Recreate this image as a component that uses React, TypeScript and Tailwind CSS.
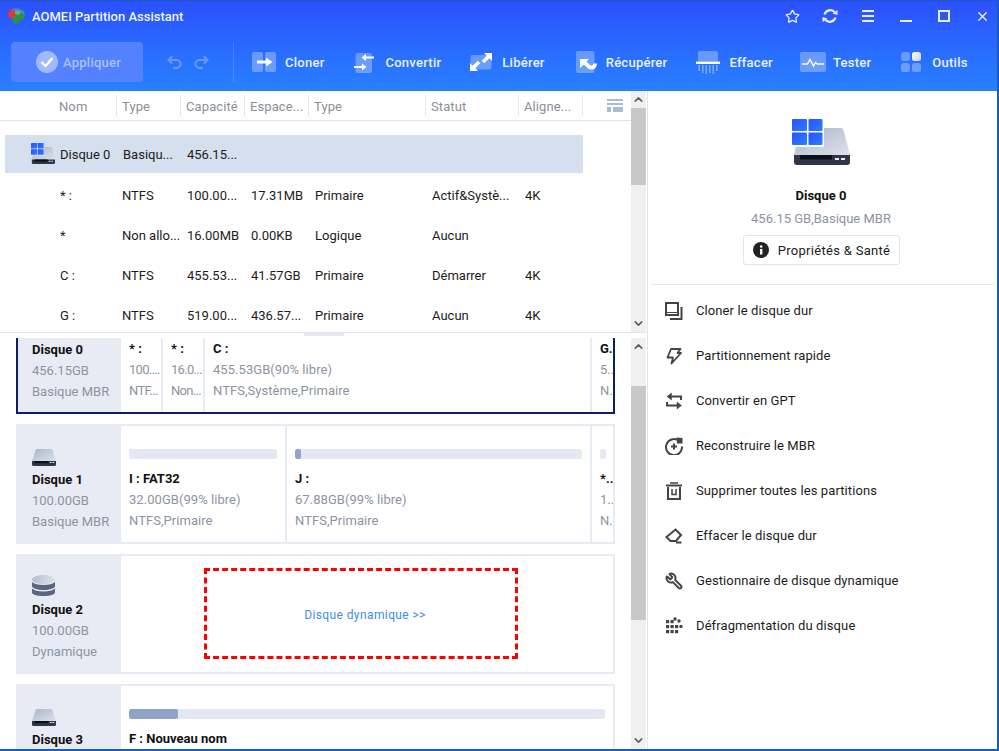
import { ChevronDown, ChevronUp, Star, Wrench, X } from 'lucide-react'
import type { ReactNode } from 'react'

const columns = [
  { label: 'Nom', cls: 'w-[117px] pl-[59px]' },
  { label: 'Type', cls: 'w-[64px] pl-[5px]' },
  { label: 'Capacité', cls: 'w-[64px] pl-[5px]' },
  { label: 'Espace...', cls: 'w-[64px] pl-[5px]' },
  { label: 'Type', cls: 'w-[117px] pl-[5px]' },
  { label: 'Statut', cls: 'w-[93px] pl-[5px]' },
  { label: 'Aligne...', cls: 'w-[64px] pl-[5px]' },
]

const rows = [
  ['* :', 'NTFS', '100.00...', '17.31MB', 'Primaire', 'Actif&Systè...', '4K'],
  ['*', 'Non allo...', '16.00MB', '0.00KB', 'Logique', 'Aucun', ''],
  ['C :', 'NTFS', '455.53...', '41.57GB', 'Primaire', 'Démarrer', '4K'],
  ['G :', 'NTFS', '519.00...', '436.57...', 'Primaire', 'Aucun', '4K'],
]

function DiskIcon({ className, id }: { className: string; id: string }) {
  return (
    <svg viewBox="0 0 24 17" className={className}>
      <defs>
        <linearGradient id={id} x1="0" y1="0" x2="1" y2="1">
          <stop offset="0" stopColor="#aab4cb" />
          <stop offset="1" stopColor="#dde1ea" />
        </linearGradient>
      </defs>
      <path d="M3.6 1.2Q3.8 0 5 0H19Q20.2 0 20.5 1.2L24 12H0Z" fill={`url(#${id})`} />
      <path d="M0 12H24V15.5Q24 17 22.5 17H1.5Q0 17 0 15.5Z" fill="#2f3648" />
      <rect x="2.5" y="12" width="14" height="2.2" fill="#0c0f18" />
      <rect x="17.8" y="13" width="1.8" height="1" fill="#e8ecf5" />
      <rect x="20.4" y="13" width="1.8" height="1" fill="#e8ecf5" />
    </svg>
  )
}

function WindowsDisk({ big }: { big?: boolean }) {
  const id = big ? 'winBig' : 'winSmall'
  return (
    <svg viewBox="0 0 58 46" preserveAspectRatio="none" className={big ? 'w-[58px] h-[46px]' : 'w-[24px] h-[21px]'}>
      <defs>
        <linearGradient id={id} x1="0" y1="0" x2="1" y2="1">
          <stop offset="0" stopColor="#2b50ff" />
          <stop offset="1" stopColor="#2a80ff" />
        </linearGradient>
        <linearGradient id={id + 'b'} x1="0" y1="0" x2="1" y2="1">
          <stop offset="0" stopColor="#aab4cb" />
          <stop offset="1" stopColor="#dde1ea" />
        </linearGradient>
      </defs>
      <path d="M8 9H49Q51 9 51.500 11L58 36H2Z" fill={`url(#${id}b)`} />
      <path d="M2 36H58V43Q58 46 55 46H5Q2 46 2 43Z" fill="#2f3648" />
      <rect x="8" y="36" width="32" height="4.500" fill="#0c0f18" />
      <rect x="43" y="39" width="4" height="2" fill="#e8ecf5" />
      <rect x="49" y="39" width="4" height="2" fill="#e8ecf5" />
      <path d="M0 0H32V28H0Z" fill={big ? '#fff' : '#d5dfee'} />
      <rect x="0" y="0" width="15" height="12" rx="1" fill={`url(#${id})`} />
      <rect x="16.500" y="0" width="14" height="12" rx="1" fill={`url(#${id})`} />
      <rect x="0" y="13.500" width="15" height="12.500" rx="1" fill={`url(#${id})`} />
      <rect x="16.500" y="13.500" width="14" height="12.500" rx="1" fill={`url(#${id})`} />
    </svg>
  )
}

function StackIcon() {
  return (
    <svg viewBox="0 0 23 21" className="w-[23px] h-[21px]">
      <defs>
        <linearGradient id="stackTop" x1="0" y1="0" x2="1" y2="0">
          <stop offset="0" stopColor="#b4bccd" />
          <stop offset="1" stopColor="#dfe3ea" />
        </linearGradient>
      </defs>
      <path d="M0 13.500V17.500C0 19.500 5 21 11.500 21S23 19.500 23 17.500V13.500C21 15.500 17 16.500 11.500 16.500S2 15.500 0 13.500Z" fill="#5a6582" />
      <path d="M0 7V11C0 13 5 15 11.500 15S23 13 23 11V7C21 9 17 10 11.500 10S2 9 0 7Z" fill="#5a6582" />
      <ellipse cx="11.500" cy="4.500" rx="11.500" ry="4.500" fill="url(#stackTop)" />
    </svg>
  )
}

function Logo() {
  return (
    <svg viewBox="0 0 18 16" className="w-[18px] h-[16px]">
      <path d="M4 1.500Q8 -0.500 12 0.500L17 3L18 7L13 8L8 4Z" fill="#4a83c4" />
      <path d="M0.500 6Q1 3 4 1.500L8 3L11 5L9 10H2Z" fill="#d93a37" />
      <path d="M9 7L13 4.500L18 7Q17.500 11 13 13L9 15.500H6L5.500 10Z" fill="#2f8f47" />
      <path d="M8 3L12 2.500L14 5L11 7L8 6Z" fill="#5dbb76" />
    </svg>
  )
}

function ClonerIcon() {
  return (
    <svg viewBox="0 0 24 20" className="w-[24px] h-[20px]">
      <rect x="0" y="0" width="11" height="20" rx="2" fill="#fff" fillOpacity="0.3" />
      <rect x="13" y="0" width="11" height="20" rx="2" fill="#fff" fillOpacity="0.3" />
      <path d="M5 8.500H14V5.500L20.500 10L14 14.500V11.500H5Z" fill="#fff" />
    </svg>
  )
}

function ConvertirIcon() {
  return (
    <svg viewBox="0 0 20 22" className="w-[20px] h-[22px]">
      <rect x="1.500" y="2" width="16.500" height="20" rx="2" fill="#fff" fillOpacity="0.3" />
      <path d="M20 5.500H12V3L7.500 6.500L12 10V7.500H20Z" fill="#fff" />
      <path d="M0 15H8V12.500L12.500 16L8 19.500V17H0Z" fill="#fff" />
    </svg>
  )
}

function LibererIcon() {
  return (
    <svg viewBox="0 0 22 18" className="w-[22px] h-[18px]">
      <rect x="0.500" y="2" width="21" height="14.500" rx="2" fill="#fff" fillOpacity="0.3" />
      <path d="M14 0H22V8L19.300 5.300L14.300 10.300L11.700 7.700L16.700 2.700Z" fill="#fff" />
      <path d="M8 18H0V10L2.700 12.700L7.700 7.700L10.300 10.300L5.300 15.300Z" fill="#fff" />
    </svg>
  )
}

function RecupererIcon() {
  return (
    <svg viewBox="0 0 21 22" className="w-[21px] h-[22px]">
      <rect x="0" y="0" width="18.500" height="22" rx="2" fill="#fff" fillOpacity="0.3" />
      <path d="M4 8H13L10.500 10.500L14 14Q16.500 15.500 17.500 12.500L21 12.500Q20.500 19 15 18.500Q13 18.500 11.500 17L8 13.500L4 17Z" fill="#fff" />
    </svg>
  )
}

function EffacerIcon() {
  return (
    <svg viewBox="0 0 24 23" className="w-[24px] h-[23px]">
      <path d="M2 2Q2 0 4 0H20Q22 0 22 2V10H2Z" fill="#fff" fillOpacity="0.3" />
      <rect x="0" y="10.500" width="24" height="2.500" rx="0.500" fill="#fff" />
      <path d="M2.500 14H4V20H2.500ZM6 14H7.500V22H6ZM9.500 14H11V23H9.500ZM13 14H14.500V22H13ZM16.500 14H18V23H16.500ZM20 14H21.500V20H20Z" fill="#fff" fillOpacity="0.4" />
    </svg>
  )
}

function TesterIcon() {
  return (
    <svg viewBox="0 0 26 20" className="w-[26px] h-[20px]">
      <rect x="0" y="0" width="26" height="20" rx="2" fill="#fff" fillOpacity="0.3" />
      <path d="M2 12H7.500L10 7.500L13.500 14L15.500 10.500L17.500 12H24" fill="none" stroke="#fff" strokeWidth="1.500" />
    </svg>
  )
}

function OutilsIcon() {
  return (
    <svg viewBox="0 0 20 20" className="w-[20px] h-[20px]">
      <defs>
        <linearGradient id="outilsTile" x1="0" y1="0" x2="1" y2="1">
          <stop offset="0" stopColor="#fff" />
          <stop offset="1" stopColor="#c3d3ff" />
        </linearGradient>
      </defs>
      <rect x="0" y="0" width="9" height="9" rx="2.500" fill="#fff" fillOpacity="0.3" />
      <rect x="11" y="0" width="9" height="9" rx="2.500" fill="url(#outilsTile)" />
      <rect x="0" y="11" width="9" height="9" rx="2.500" fill="#fff" fillOpacity="0.3" />
      <rect x="11" y="11" width="9" height="9" rx="2.500" fill="#fff" fillOpacity="0.3" />
    </svg>
  )
}

function ToolItem({ icon, label, cls }: { icon: ReactNode; label: string; cls: string }) {
  return (
    <div className={`flex items-center h-[40px] ${cls}`}>
      {icon}
      <span className="pt-[2px] text-[13px] font-medium tracking-[0.25px] text-white/90">{label}</span>
    </div>
  )
}

function ScrollBar({ top, thumb }: { top: string; thumb: string }) {
  return (
    <div className="w-[15px] flex flex-col bg-[#f0f0f0]">
      <div className={`flex justify-center pt-[2px] ${top}`}>
        <ChevronUp size={13} strokeWidth={3} className="text-[#606060]" />
      </div>
      <div className={`bg-[#c8c8c8] ${thumb}`} />
      <div className="flex-1 flex items-end justify-center pb-[2px]">
        <ChevronDown size={13} strokeWidth={3} className="text-[#606060]" />
      </div>
    </div>
  )
}

function DiskHead({ icon, name, size, kind }: { icon: ReactNode; name: string; size: string; kind: string }) {
  return (
    <div className="w-[101px] shrink-0 bg-[#e8ebf4] pl-[14px] h-full flex flex-col">
      <div className="h-[40px] flex items-end">{icon}</div>
      <div className="mt-[3px] text-[13px] leading-[21px] font-bold text-[#111]">{name}</div>
      <div className="text-[13px] leading-[21px] text-[#8d94a1]">{size}</div>
      <div className="text-[13px] leading-[21px] text-[#8d94a1]">{kind}</div>
    </div>
  )
}

function Part({ w, bar, name, size, info, fill, tight }: { w: string; bar: string; name: string; size: string; info: string; fill?: string; tight?: boolean }) {
  const spacing = tight ? 'tracking-[-0.7px]' : 'tracking-[0.05px]'
  return (
    <div className={`h-full overflow-hidden bg-white ${w}`}>
      <div className={`mt-[23px] h-[10px] rounded-[2px] bg-[#e3e8f3] overflow-hidden ${bar}`}>
        {fill && <div className={`h-full rounded-[2px] bg-[#8ea5c8] ${fill}`} />}
      </div>
      <div className="mt-[9px] pl-[8px] text-[13px] leading-[21px] font-bold text-[#111] whitespace-nowrap">{name}</div>
      <div className={`pl-[8px] text-[13px] leading-[21px] text-[#8d94a1] whitespace-nowrap ${spacing}`}>{size}</div>
      <div className={`pl-[8px] text-[13px] leading-[21px] text-[#8d94a1] whitespace-nowrap ${spacing}`}>{info}</div>
    </div>
  )
}

function DiskCard({ head, children, active }: { head: ReactNode; children: ReactNode; active?: boolean }) {
  return (
    <div className={`ml-[16px] w-[599px] h-[120px] mb-[10px] flex gap-[2px] border-2 bg-[#e8ebf4] ${active ? 'border-[#0b1f66]' : 'border-[#e8ebf4]'}`}>
      {head}
      {children}
    </div>
  )
}

const actions: { label: string; icon: ReactNode }[] = [
  {
    label: 'Cloner le disque dur',
    icon: (
      <svg viewBox="0 0 18 18" className="w-[18px] h-[18px]" fill="none" stroke="#444" strokeWidth="2">
        <rect x="1" y="1" width="12" height="12" />
        <path d="M1 10.500H13" strokeWidth="1" />
        <path d="M16.500 5V17H5" />
      </svg>
    ),
  },
  {
    label: 'Partitionnement rapide',
    icon: (
      <svg viewBox="0 0 18 18" className="w-[18px] h-[18px]" fill="none" stroke="#444" strokeWidth="1.800" strokeLinejoin="round">
        <path d="M6 2H15.500L12.500 6H16L6.500 16.500L8 10.500H2.500Z" />
      </svg>
    ),
  },
  {
    label: 'Convertir en GPT',
    icon: (
      <svg viewBox="0 0 18 18" className="w-[18px] h-[18px]" fill="none" stroke="#444" strokeWidth="2">
        <path d="M16 8V4.500H5" />
        <path d="M2 10V13.500H13" />
        <path d="M6.500 1L2 4.500L6.500 8Z" fill="#444" strokeWidth="0.500" />
        <path d="M12 10L16.500 13.500L12 17Z" fill="#444" strokeWidth="0.500" />
      </svg>
    ),
  },
  {
    label: 'Reconstruire le MBR',
    icon: (
      <svg viewBox="0 0 18 18" className="w-[18px] h-[18px]" fill="none" stroke="#444" strokeWidth="2">
        <path d="M13.500 3.500A8 8 0 1 0 17 9.500" />
        <path d="M6 9.500H12M9 6.500V12.500" />
        <path d="M11.500 0.500L17.500 1V6.500H12Z" fill="#444" stroke="none" />
      </svg>
    ),
  },
  {
    label: 'Supprimer toutes les partitions',
    icon: (
      <svg viewBox="0 0 18 18" className="w-[18px] h-[18px]" fill="none" stroke="#444" strokeWidth="2">
        <path d="M1 3.500H17" />
        <path d="M5 1H13" strokeWidth="1.500" />
        <path d="M3 5V17H15V5" />
        <path d="M7 7V12.500H11V7" strokeWidth="1.500" />
      </svg>
    ),
  },
  {
    label: 'Effacer le disque dur',
    icon: (
      <svg viewBox="0 0 18 18" className="w-[18px] h-[18px]" fill="none" stroke="#444" strokeWidth="2" strokeLinejoin="miter">
        <path d="M10.500 2.500L16 8L11 14H5.500L1.500 10Z" />
        <path d="M11 15.500H16.500" />
      </svg>
    ),
  },
  {
    label: 'Gestionnaire de disque dynamique',
    icon: <Wrench size={18} strokeWidth={2.6} color="#444" className="-scale-x-100" />,
  },
  {
    label: 'Défragmentation du disque',
    icon: (
      <svg viewBox="0 0 18 18" className="w-[18px] h-[18px]" fill="#444">
        <rect x="1" y="3" width="3.200" height="3.200" />
        <rect x="5.500" y="3" width="3.200" height="3.200" />
        <circle cx="10" cy="2" r="1.700" />
        <circle cx="14" cy="4" r="1.700" />
        <rect x="1" y="8" width="3.200" height="3.200" />
        <rect x="5.500" y="8" width="3.200" height="3.200" />
        <rect x="10" y="8" width="3.200" height="3.200" />
        <circle cx="16" cy="9.500" r="1.700" />
        <rect x="1" y="13" width="3.200" height="3.200" />
        <rect x="5.500" y="13" width="3.200" height="3.200" />
        <rect x="10" y="13" width="3.200" height="3.200" />
      </svg>
    ),
  },
]

export default function App(): JSX.Element {
  return (
    <div className="w-[999px] h-[751px] overflow-hidden flex flex-col bg-white border-t border-r-2 border-b-2 border-[#1a5cb8] font-['Roboto',sans-serif] text-[13px] text-[#1c1c1c]">
      <header className="h-[90px] shrink-0 bg-gradient-to-b from-[#2c4fff] to-[#2a80ff]">
        <div className="flex items-center h-[30px] pl-[7px]">
          <Logo />
          <span className="ml-[7px] pt-[2px] text-[13px] font-medium text-white/95">AOMEI Partition Assistant</span>
          <div className="ml-auto -mr-[4px] flex items-center text-white/90">
            <div className="w-[38px] flex justify-center"><Star size={15} strokeWidth={2} /></div>
            <div className="w-[38px] flex justify-center">
              <svg viewBox="0 0 16 16" className="w-[16px] h-[16px]" fill="none" stroke="currentColor" strokeWidth="2.200">
                <path d="M2.500 6.500A6 6 0 0 1 12.500 4" />
                <path d="M13.500 9.500A6 6 0 0 1 3.500 12" />
                <path d="M10.500 5.500L15.500 7V2Z" fill="currentColor" stroke="none" />
                <path d="M5.500 10.500L0.500 9V14Z" fill="currentColor" stroke="none" />
              </svg>
            </div>
            <div className="w-[38px] flex flex-col items-center gap-[3px]">
              <div className="w-[12px] h-[2px] bg-white/90" />
              <div className="w-[12px] h-[2px] bg-white/90" />
              <div className="w-[12px] h-[2px] bg-white/90" />
            </div>
            <div className="w-[38px] flex justify-center pt-[9px]"><div className="w-[12px] h-[2px] bg-white/90" /></div>
            <div className="w-[38px] flex justify-center"><div className="w-[12px] h-[12px] border-2 border-white/90" /></div>
            <div className="w-[38px] flex justify-center"><X size={15} strokeWidth={2.2} /></div>
          </div>
        </div>
        <div className="flex items-center h-[40px] mt-[11px] pl-[11px]">
          <div className="w-[132px] h-[40px] rounded-[4px] bg-[#5481ff] flex items-center pl-[25px]">
            <svg viewBox="0 0 22 22" className="w-[22px] h-[22px]">
              <circle cx="11" cy="11" r="11" fill="#fff" fillOpacity="0.45" />
              <path d="M5.500 11L9.500 15L16.500 7" fill="none" stroke="#fff" strokeWidth="2.400" />
            </svg>
            <span className="ml-[5px] pt-[2px] text-[13px] font-medium tracking-[0.25px] text-[#a9c1ff]">Appliquer</span>
          </div>
          <svg viewBox="0 0 42 14" className="ml-[24px] w-[42px] h-[14px]" fill="none" stroke="#6c98ff" strokeWidth="2">
            <path d="M5 1.500L1.500 5L5 8.500" />
            <path d="M2 5H9.500A4 4 0 0 1 9.500 13H6" />
            <path d="M37 1.500L40.500 5L37 8.500" />
            <path d="M40 5H32.500A4 4 0 0 0 32.500 13H36" />
          </svg>
          <div className="ml-[24px] w-px h-[40px] bg-white/15" />
          <ToolItem cls="ml-[18px]" icon={<span className="mr-[9px] flex"><ClonerIcon /></span>} label="Cloner" />
          <ToolItem cls="ml-[30px]" icon={<span className="mr-[11px] flex"><ConvertirIcon /></span>} label="Convertir" />
          <ToolItem cls="ml-[29px]" icon={<span className="mr-[10px] flex"><LibererIcon /></span>} label="Libérer" />
          <ToolItem cls="ml-[31px]" icon={<span className="mr-[9px] flex"><RecupererIcon /></span>} label="Récupérer" />
          <ToolItem cls="ml-[29px]" icon={<span className="mr-[9px] flex"><EffacerIcon /></span>} label="Effacer" />
          <ToolItem cls="ml-[27px]" icon={<span className="mr-[7px] flex"><TesterIcon /></span>} label="Tester" />
          <ToolItem cls="ml-[30px]" icon={<span className="mr-[11px] flex"><OutilsIcon /></span>} label="Outils" />
        </div>
      </header>

      <div className="flex flex-1 min-h-0">
        <div className="w-[648px] shrink-0 flex flex-col border-r border-[#e1e4ee]">
          <div className="h-[242px] shrink-0 flex border-b border-[#e1e4ee]">
            <div className="w-[631px] overflow-hidden">
              <div className="h-[30px] flex items-center border-b border-[#dfe4ee]">
                {columns.map((c, i) => (
                  <div key={i} className={`h-[22px] pt-[2px] flex items-center text-[#8b8f98] tracking-[0.1px] border-r border-[#e4e8f1] ${c.cls}`}>
                    {c.label}
                  </div>
                ))}
                <svg viewBox="0 0 16 13" className="ml-[24px] w-[16px] h-[13px]" fill="#a9bcd6">
                  <rect x="0" y="0" width="16" height="2" />
                  <rect x="0" y="4" width="16" height="2" />
                  <rect x="0" y="8" width="4" height="5" />
                  <rect x="6" y="8" width="10" height="5" />
                </svg>
              </div>
              <div className="mt-[14px] ml-[5px] w-[578px] h-[38px] mb-[2px] flex items-center bg-[#d5dfee] whitespace-nowrap">
                <div className="w-[55px] pl-[26px] pb-[2px] flex"><WindowsDisk /></div>
                <div className="w-[63px] pt-[2px]">Disque 0</div>
                <div className="w-[64px] pt-[2px]">Basiqu...</div>
                <div className="pt-[2px]">456.15...</div>
              </div>
              {rows.map((r) => (
                <div key={r[0]} className="ml-[60px] pt-[2px] h-[40px] flex items-center whitespace-nowrap">
                  <div className="w-[62px]">{r[0]}</div>
                  <div className="w-[65px]">{r[1]}</div>
                  <div className="w-[64px]">{r[2]}</div>
                  <div className="w-[64px]">{r[3]}</div>
                  <div className="w-[117px]">{r[4]}</div>
                  <div className="w-[93px]">{r[5]}</div>
                  <div>{r[6]}</div>
                </div>
              ))}
            </div>
            <ScrollBar top="h-[17px]" thumb="h-[77px]" />
          </div>

          <div className="h-[5px] shrink-0 flex justify-center">
            <div className="w-[40px] h-[3px] bg-[#e6e9f2]" />
          </div>

          <div className="flex-1 min-h-0 flex">
            <div className="w-[631px] overflow-hidden">
              <div className="-mt-[44px]">
                <DiskCard active head={<DiskHead icon={<DiskIcon id="d0" className="w-[24px] h-[17px]" />} name="Disque 0" size="456.15GB" kind="Basique MBR" />}>
                  <Part tight w="w-[40px]" bar="mx-[8px]" name="* :" size="100...." info="NTF..." />
                  <Part tight w="w-[40px]" bar="mx-[8px]" name="* :" size="16.0..." info="Non..." />
                  <Part w="w-[385px]" bar="mx-[8px]" name="C :" size="455.53GB(90% libre)" info="NTFS,Système,Primaire" />
                  <Part w="w-[21px]" bar="mx-[8px]" name="G." size="5.." info="N." />
                </DiskCard>
                <DiskCard head={<DiskHead icon={<DiskIcon id="d1" className="w-[24px] h-[17px]" />} name="Disque 1" size="100.00GB" kind="Basique MBR" />}>
                  <Part w="w-[164px]" bar="mx-[8px]" name="I : FAT32" size="32.00GB(99% libre)" info="NTFS,Primaire" />
                  <Part w="w-[303px]" bar="mx-[8px]" fill="w-[6px]" name="J :" size="67.88GB(99% libre)" info="NTFS,Primaire" />
                  <Part w="w-[21px]" bar="ml-[8px] mr-[7px]" name="*.." size="1.." info="N." />
                </DiskCard>
                <DiskCard head={<DiskHead icon={<StackIcon />} name="Disque 2" size="100.00GB" kind="Dynamique" />}>
                  <div className="flex-1 h-full bg-white pl-[83px] pt-[12px]">
                    <div className="w-[314px] h-[91px] border-[3px] border-dashed border-[#f00] flex items-center justify-center pl-[8px] pt-[3px] text-[12px] tracking-[0.4px] text-[#3e8ee8]">
                      Disque dynamique &gt;&gt;
                    </div>
                  </div>
                </DiskCard>
                <DiskCard head={<DiskHead icon={<DiskIcon id="d3" className="w-[24px] h-[17px]" />} name="Disque 3" size="" kind="" />}>
                  <Part w="flex-1" bar="mx-[8px]" fill="w-[49px]" name="F : Nouveau nom" size="" info="" />
                </DiskCard>
              </div>
            </div>
            <ScrollBar top="h-[48px]" thumb="h-[234px]" />
          </div>
        </div>

        <aside className="flex-1 min-w-0 px-[3px]">
          <div className="h-[194px] flex flex-col items-center border-b border-[#e3e7f0] pt-[28px] pr-[3px]">
            <WindowsDisk big />
            <div className="mt-[21px] font-bold leading-[20px] text-[#111]">Disque 0</div>
            <div className="mt-[3px] leading-[20px] text-[#8d94a1]">456.15 GB,Basique MBR</div>
            <div className="mt-[6px] w-[157px] h-[30px] rounded-[3px] border border-[#dfe4ee] flex items-center justify-center gap-[9px] pl-[1px] tracking-[0.3px]">
              <svg viewBox="0 0 16 16" className="w-[16px] h-[16px]">
                <circle cx="8" cy="8" r="8" fill="#222" />
                <rect x="7" y="7" width="2.400" height="5.500" fill="#fff" />
                <circle cx="8.200" cy="4.500" r="1.300" fill="#fff" />
              </svg>
              <span className="pt-[2px]">Propriétés &amp; Santé</span>
            </div>
          </div>
          <div className="pt-[3px]">
            {actions.map((a) => (
              <div key={a.label} className="h-[45px] flex items-center pl-[14px] gap-[13px] tracking-[0.1px] text-[#1c1c1c]">
                <span className="flex w-[18px]">{a.icon}</span>
                <span>{a.label}</span>
              </div>
            ))}
          </div>
        </aside>
      </div>
    </div>
  )
}
